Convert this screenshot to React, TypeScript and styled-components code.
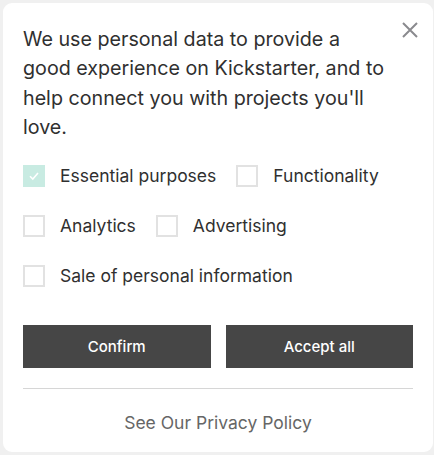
import React from "react";
import styled, { createGlobalStyle } from "styled-components";

const Global = createGlobalStyle`
  html, body { margin: 0; padding: 0; background: #f0f0f0; }
  body { font-family: Inter, "Noto Sans", sans-serif; }
  #root { padding: 3px 1px 3px 3px; }
`;

const Card = styled.div`
  position: relative;
  box-sizing: border-box;
  width: 430px;
  height: 449px;
  background: #fff;
  border-radius: 9px;
  padding: 22px 20px 0 20px;
  color: #333;
`;

const Close = styled.button`
  position: absolute;
  top: 16px;
  right: 12px;
  width: 22px;
  height: 22px;
  padding: 0;
  border: 0;
  background: none;
  cursor: pointer;
  display: flex;
  align-items: center;
  justify-content: center;
`;

const Message = styled.p`
  margin: 0;
  width: 365px;
  font-size: 19.7px;
  line-height: 29.3px;
  color: #303030;
`;

const Options = styled.div`
  margin-top: 23px;
  display: flex;
  flex-wrap: wrap;
  column-gap: 20px;
  row-gap: 28px;
  width: 370px;
`;

const Option = styled.label`
  display: flex;
  align-items: center;
  gap: 15px;
  font-size: 17.5px;
  line-height: 22px;
  color: #303030;
`;

const Box = styled.span<{ $checked?: boolean }>`
  box-sizing: border-box;
  width: 22px;
  height: 22px;
  flex: none;
  border: ${(p) => (p.$checked ? "none" : "2px solid #e2e2e2")};
  background: ${(p) => (p.$checked ? "#c8ebe2" : "#fff")};
  display: flex;
  align-items: center;
  justify-content: center;
`;

const Buttons = styled.div`
  margin-top: 38px;
  display: flex;
  gap: 15px;
`;

const Button = styled.button`
  flex: 1;
  height: 43px;
  border: 0;
  background: #464646;
  color: #fff;
  font-family: Inter, "Noto Sans", sans-serif;
  font-size: 15px;
  font-weight: 500;
  cursor: pointer;
`;

const Divider = styled.hr`
  margin: 20px 0 0 0;
  border: 0;
  border-top: 1px solid #d6d6d6;
`;

const Policy = styled.a`
  display: block;
  text-align: center;
  margin-top: 23px;
  font-size: 17.5px;
  line-height: 22px;
  color: #666;
  text-decoration: none;
`;

const opts: { label: string; checked?: boolean }[] = [
  { label: "Essential purposes", checked: true },
  { label: "Functionality" },
  { label: "Analytics" },
  { label: "Advertising" },
  { label: "Sale of personal information" },
];

export default function App() {
  return (
    <>
      <Global />
      <Card>
        <Close aria-label="Close">
          <svg width="16" height="16" viewBox="0 0 16 16">
            <path d="M1 1L15 15M15 1L1 15" stroke="#8a8a8e" strokeWidth="2" />
          </svg>
        </Close>
        <Message>
          We use personal data to provide a good experience on Kickstarter, and to help connect you with projects you'll love.
        </Message>
        <Options>
          {opts.map((o) => (
            <Option key={o.label}>
              <Box $checked={o.checked}>
                {o.checked && (
                  <svg width="12" height="10" viewBox="0 0 12 10">
                    <path d="M2 5.2L4.8 8L10 2" stroke="#fff" strokeWidth="1.6" fill="none" />
                  </svg>
                )}
              </Box>
              {o.label}
            </Option>
          ))}
        </Options>
        <Buttons>
          <Button>Confirm</Button>
          <Button>Accept all</Button>
        </Buttons>
        <Divider />
        <Policy href="#">See Our Privacy Policy</Policy>
      </Card>
    </>
  );
}
